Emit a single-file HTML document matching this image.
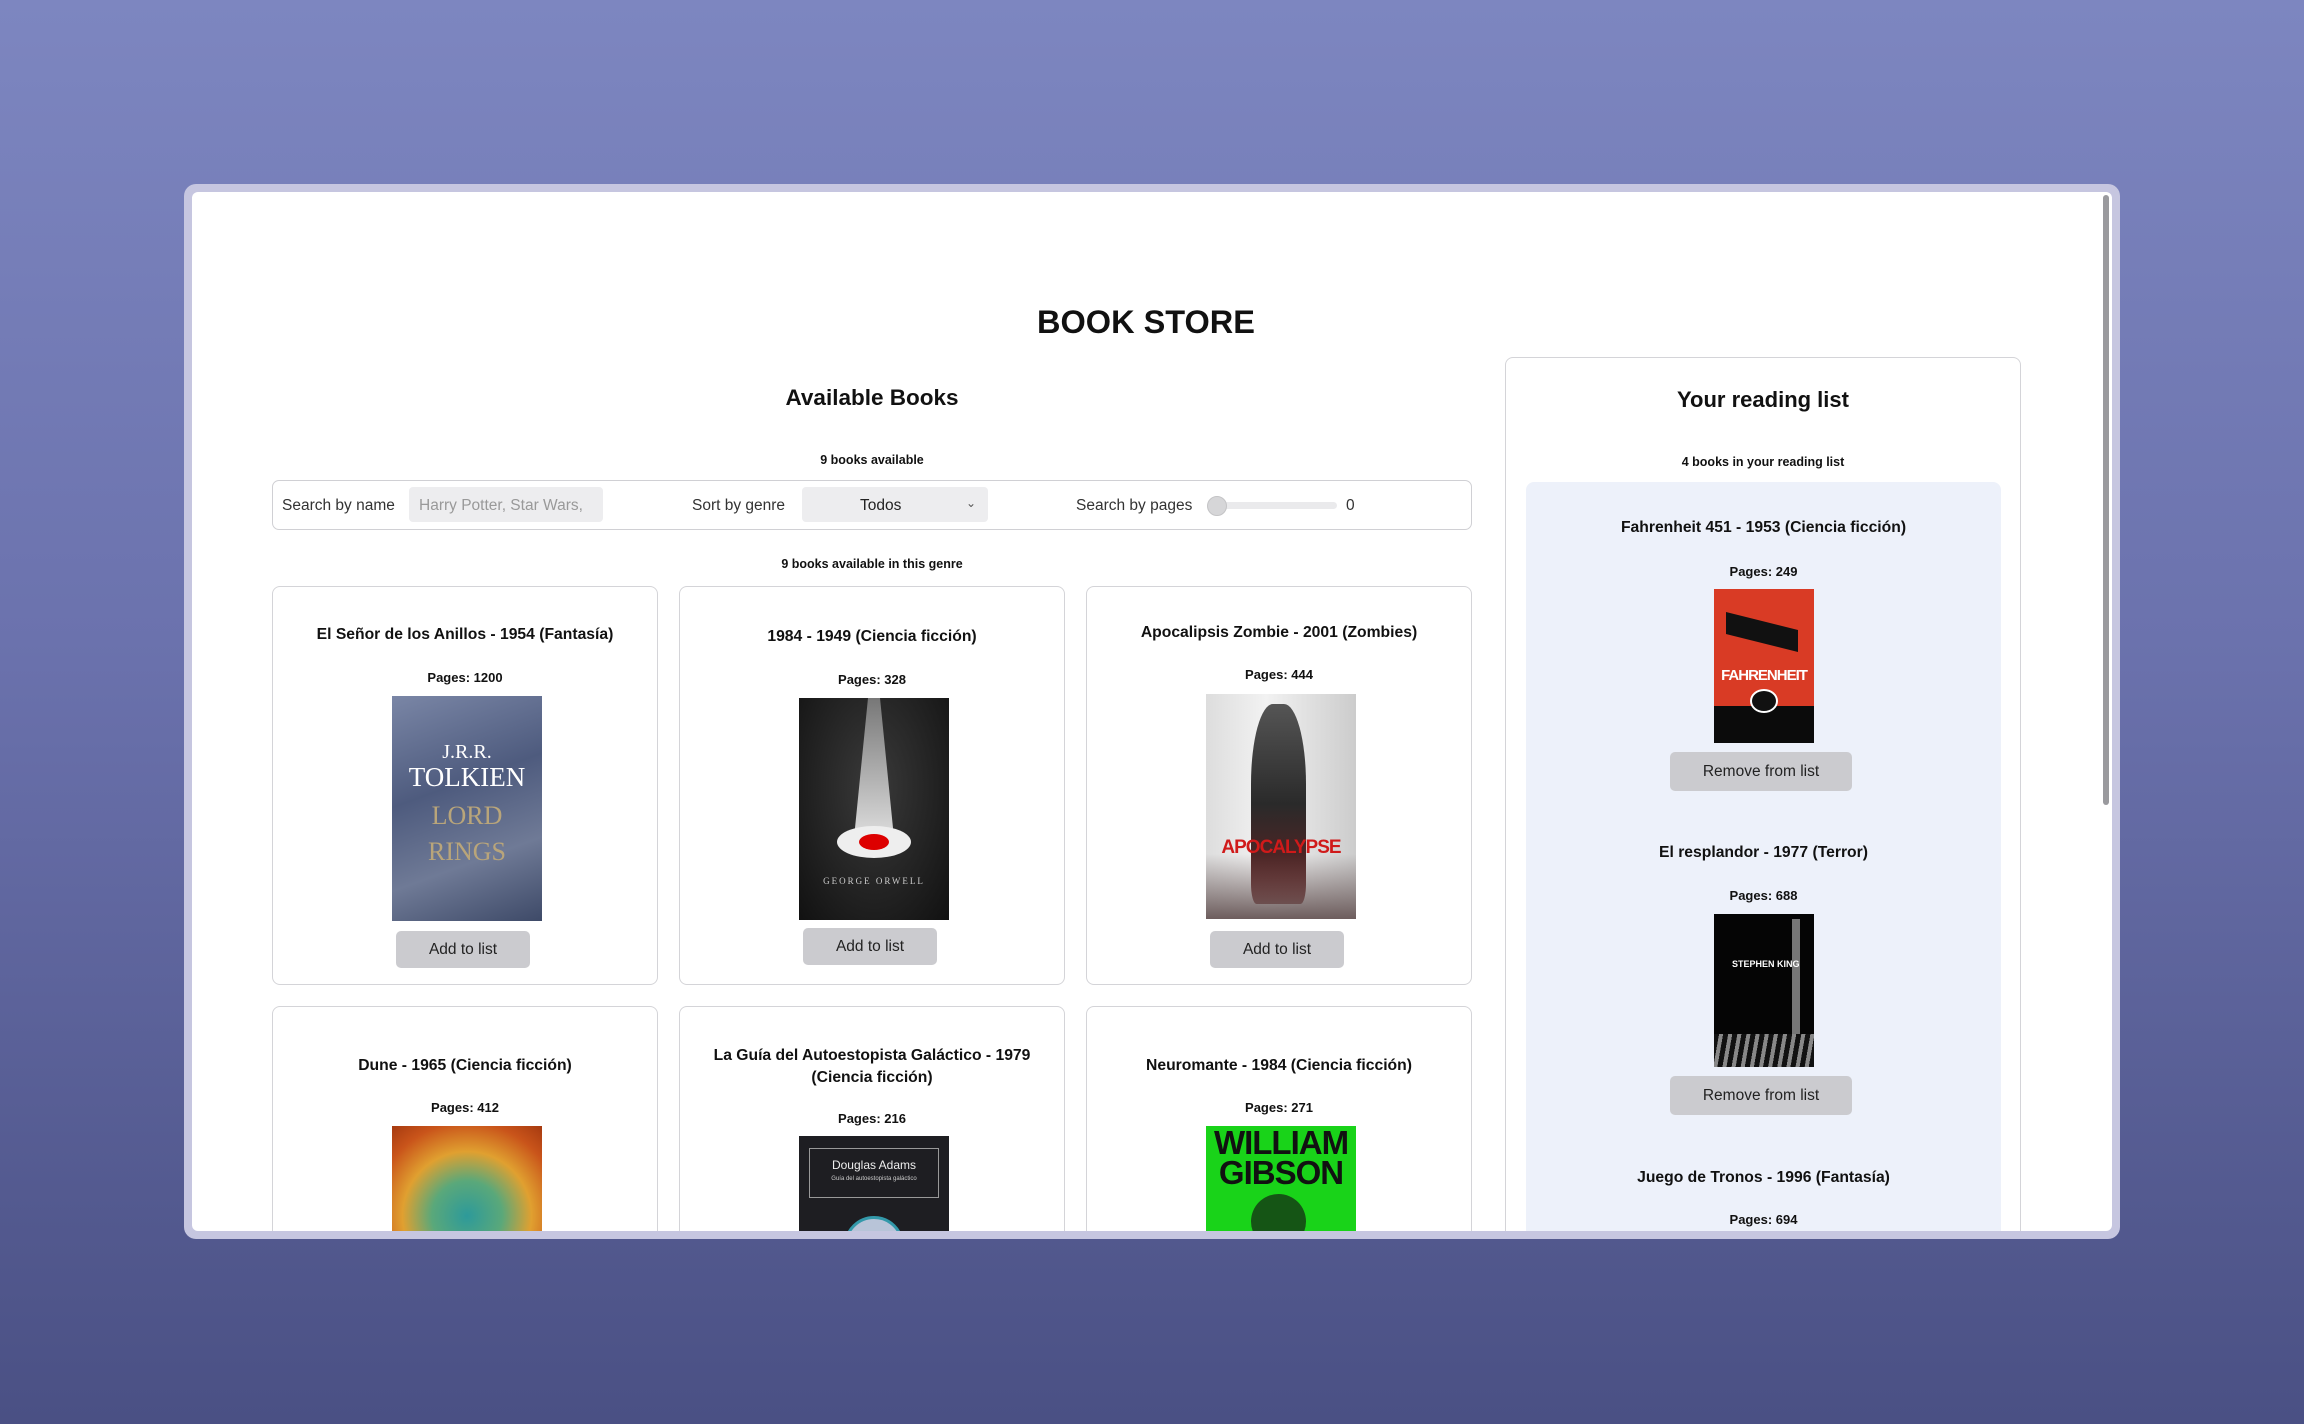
<!DOCTYPE html>
<html><head><meta charset="utf-8"><style>
*{box-sizing:border-box;margin:0;padding:0}
body{width:2304px;height:1424px;overflow:hidden;background:linear-gradient(180deg,#7d86c0 0%,#6b72ad 45%,#4a5084 100%);font-family:"Liberation Sans",sans-serif;color:#111;position:relative}
.win{position:absolute;left:184px;top:184px;width:1936px;height:1055px;border-radius:12px;background:#c6c6e0;padding:8px}
.inner{position:relative;width:100%;height:100%;background:#fff;border-radius:6px;overflow:hidden}
.abs{position:absolute}
.c{text-align:center}
.card{position:absolute;border:1.5px solid #d4d4d8;border-radius:8px;background:#fff}
.t{position:absolute;left:0;right:0;text-align:center;font-size:15.7px;font-weight:bold}
.p{position:absolute;left:0;right:0;text-align:center;font-size:13px;font-weight:bold}
.btn{position:absolute;background:#cbcbcf;border-radius:5px;font-size:15.5px;color:#222;text-align:center;line-height:37px;height:37px}
.img{position:absolute;overflow:hidden}
</style></head><body>
<div class="win"><div class="inner">
<div class="abs c" style="left:0;width:1908px;top:112px;font-size:32.5px;font-weight:bold">BOOK STORE</div>
<div class="abs" style="right:3px;top:3px;width:6px;height:610px;background:#9a9a9e;border-radius:3px"></div>

<div class="abs c" style="left:80px;width:1200px;top:193px;font-size:22.5px;font-weight:bold">Available Books</div>
<div class="abs c" style="left:80px;width:1200px;top:261px;font-size:12.5px;font-weight:bold">9 books available</div>
<div class="abs" style="left:80px;top:288px;width:1200px;height:50px;border:1.5px solid #d0d0d4;border-radius:7px">
 <div class="abs" style="left:9px;top:16px;font-size:15.5px;color:#333">Search by name</div>
 <div class="abs" style="left:136px;top:6px;width:194px;height:35px;background:#ededef;border-radius:4px;font-size:15.5px;color:#999;line-height:37px;padding-left:10px;white-space:nowrap;overflow:hidden">Harry Potter, Star Wars,</div>
 <div class="abs" style="left:419px;top:16px;font-size:15.5px;color:#333">Sort by genre</div>
 <div class="abs" style="left:529px;top:6px;width:186px;height:35px;background:#ededef;border-radius:4px;font-size:15.5px;line-height:37px;padding-left:58px;color:#222">Todos<span style="position:absolute;right:12px;top:-2px;font-size:12px;color:#555">&#8964;</span></div>
 <div class="abs" style="left:803px;top:16px;font-size:15.5px;color:#333">Search by pages</div>
 <div class="abs" style="left:936px;top:21px;width:128px;height:7px;background:#eaeaec;border-radius:4px"></div>
 <div class="abs" style="left:934px;top:15px;width:20px;height:20px;background:#d6d6d8;border:1px solid #c4c4c6;border-radius:50%"></div>
 <div class="abs" style="left:1073px;top:16px;font-size:15.5px;color:#333">0</div>
</div>
<div class="abs c" style="left:80px;width:1200px;top:365px;font-size:12.5px;font-weight:bold">9 books available in this genre</div>

<div class="card" style="left:80px;top:394px;width:386px;height:399px">
 <div class="t" style="top:39px">El Señor de los Anillos - 1954 (Fantasía)</div>
 <div class="p" style="top:83px">Pages: 1200</div>
 <div class="img" style="left:119px;top:109px;width:150px;height:225px;background:linear-gradient(160deg,#7a86a6,#4e5b7e 40%,#6f7a96 70%,#3e4a68)">
  <div class="c" style="position:absolute;top:45px;width:100%;color:#fff;font-family:'Liberation Serif',serif;font-size:20px">J.R.R.</div>
  <div class="c" style="position:absolute;top:66px;width:100%;color:#fff;font-family:'Liberation Serif',serif;font-size:27px">TOLKIEN</div>
  <div class="c" style="position:absolute;top:102px;width:100%;color:#b9a57a;font-family:'Liberation Serif',serif;font-size:26px;line-height:36px">LORD<br>RINGS</div>
 </div>
 <div class="btn" style="left:123px;top:344px;width:134px">Add to list</div>
</div>
<div class="card" style="left:487px;top:394px;width:386px;height:399px">
 <div class="t" style="top:41px">1984 - 1949 (Ciencia ficción)</div>
 <div class="p" style="top:85px">Pages: 328</div>
 <div class="img" style="left:119px;top:111px;width:150px;height:222px;background:radial-gradient(ellipse at 50% 40%,#3a3a3a,#111)">
  <div style="position:absolute;left:55px;top:0;width:40px;height:140px;background:linear-gradient(#777,#ddd);clip-path:polygon(35% 0,65% 0,100% 100%,0 100%)"></div>
  <div style="position:absolute;left:38px;top:128px;width:74px;height:32px;background:#eee;border-radius:50%"></div>
  <div style="position:absolute;left:60px;top:136px;width:30px;height:16px;background:#d00;border-radius:50%"></div>
  <div class="c" style="position:absolute;top:178px;width:100%;color:#ccc;font-size:9px;letter-spacing:2px;font-family:'Liberation Serif',serif">GEORGE ORWELL</div>
 </div>
 <div class="btn" style="left:123px;top:341px;width:134px">Add to list</div>
</div>
<div class="card" style="left:894px;top:394px;width:386px;height:399px">
 <div class="t" style="top:37px">Apocalipsis Zombie - 2001 (Zombies)</div>
 <div class="p" style="top:80px">Pages: 444</div>
 <div class="img" style="left:119px;top:107px;width:150px;height:225px;background:linear-gradient(90deg,#ddd,#f2f2f2 40%,#ccc)">
  <div style="position:absolute;left:45px;top:10px;width:55px;height:200px;background:linear-gradient(#555,#2a2a2a 50%,#6a2020);border-radius:40% 40% 10% 10%"></div>
  <div style="position:absolute;left:0;top:160px;width:150px;height:65px;background:linear-gradient(transparent,#6d5d5d)"></div>
  <div class="c" style="position:absolute;top:143px;width:100%;color:#d01a1a;font-weight:bold;font-size:19px;letter-spacing:-1px">APOCALYPSE</div>
 </div>
 <div class="btn" style="left:123px;top:344px;width:134px">Add to list</div>
</div>

<div class="card" style="left:80px;top:814px;width:386px;height:420px">
 <div class="t" style="top:50px">Dune - 1965 (Ciencia ficción)</div>
 <div class="p" style="top:93px">Pages: 412</div>
 <div class="img" style="left:119px;top:119px;width:150px;height:120px;background:radial-gradient(circle at 50% 75%,#2d9a9a 0,#5aa87a 30%,#e0a030 55%,#c9541a 80%,#a63a10)"></div>
</div>
<div class="card" style="left:487px;top:814px;width:386px;height:420px">
 <div class="t" style="top:38px;line-height:22px">La Guía del Autoestopista Galáctico - 1979<br>(Ciencia ficción)</div>
 <div class="p" style="top:104px">Pages: 216</div>
 <div class="img" style="left:119px;top:129px;width:150px;height:110px;background:#1e1e22">
  <div style="position:absolute;left:10px;top:12px;width:130px;height:50px;border:1px solid #999"></div>
  <div class="c" style="position:absolute;top:22px;width:100%;color:#eee;font-size:12px">Douglas Adams</div>
  <div class="c" style="position:absolute;top:40px;width:100%;color:#ccc;font-size:6px">Guía del autoestopista galáctico</div>
  <div style="position:absolute;left:45px;top:80px;width:60px;height:60px;border-radius:50%;background:#b8c4d8;border:3px solid #39a"></div>
 </div>
</div>
<div class="card" style="left:894px;top:814px;width:386px;height:420px">
 <div class="t" style="top:50px">Neuromante - 1984 (Ciencia ficción)</div>
 <div class="p" style="top:93px">Pages: 271</div>
 <div class="img" style="left:119px;top:119px;width:150px;height:120px;background:#19d319">
  <div class="c" style="position:absolute;top:2px;width:100%;font-weight:bold;font-size:33px;line-height:30px;color:#111;letter-spacing:-1px">WILLIAM<br>GIBSON</div>
  <div style="position:absolute;left:45px;top:68px;width:55px;height:55px;border-radius:50%;background:#155515"></div>
 </div>
</div>

<div class="card" style="left:1313px;top:165px;width:516px;height:900px">
 <div class="abs c" style="left:0;right:0;top:29px;font-size:22px;font-weight:bold">Your reading list</div>
 <div class="abs c" style="left:0;right:0;top:97px;font-size:12.5px;font-weight:bold">4 books in your reading list</div>
 <div class="abs" style="left:20px;top:124px;width:475px;height:800px;background:#edf1fa;border-radius:8px">
  <div class="t" style="top:37px">Fahrenheit 451 - 1953 (Ciencia ficción)</div>
  <div class="p" style="top:82px">Pages: 249</div>
  <div class="img" style="left:188px;top:107px;width:100px;height:154px;background:linear-gradient(#d93b25 0,#d93b25 76%,#0b0b0b 76%)">
   <div style="position:absolute;left:12px;top:32px;width:72px;height:22px;background:#111;transform:skewY(14deg)"></div>
   <div class="c" style="position:absolute;top:78px;width:100%;color:#fff;font-weight:bold;font-size:15px;letter-spacing:-1px">FAHRENHEIT</div>
   <div style="position:absolute;left:36px;top:100px;width:28px;height:24px;border-radius:50%;background:#111;border:2px solid #fff"></div>
  </div>
  <div class="btn" style="left:144px;top:270px;width:182px;height:39px;line-height:39px">Remove from list</div>
  <div class="t" style="top:362px">El resplandor - 1977 (Terror)</div>
  <div class="p" style="top:406px">Pages: 688</div>
  <div class="img" style="left:188px;top:432px;width:100px;height:153px;background:#050505">
   <div style="position:absolute;left:78px;top:5px;width:8px;height:120px;background:#777"></div>
   <div style="position:absolute;left:0;top:120px;width:100px;height:33px;background:repeating-linear-gradient(100deg,#111 0 5px,#888 5px 9px)"></div>
   <div style="position:absolute;left:18px;top:45px;color:#fff;font-size:9px;font-weight:bold">STEPHEN KING</div>
  </div>
  <div class="btn" style="left:144px;top:594px;width:182px;height:39px;line-height:39px">Remove from list</div>
  <div class="t" style="top:687px">Juego de Tronos - 1996 (Fantasía)</div>
  <div class="p" style="top:730px">Pages: 694</div>
 </div>
</div>
</div></div>
</body></html>
